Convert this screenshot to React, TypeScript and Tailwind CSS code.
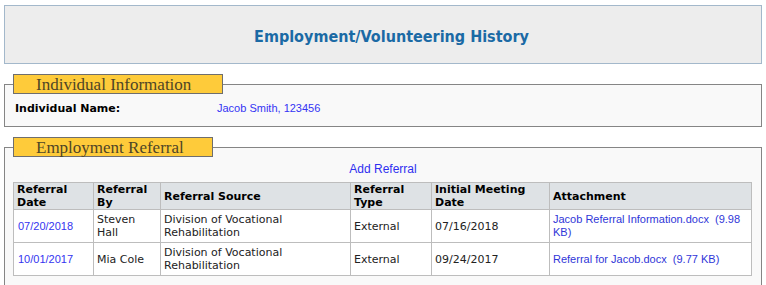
const verdana = "font-['Verdana','DejaVu_Sans',sans-serif]"
const arial = "font-['Arial','Liberation_Sans',sans-serif]"

const rows = [
  {
    date: '07/20/2018',
    by: 'Steven Hall',
    source: 'Division of Vocational Rehabilitation',
    type: 'External',
    meeting: '07/16/2018',
    file: 'Jacob Referral Information.docx',
    size: '(9.98 KB)',
  },
  {
    date: '10/01/2017',
    by: 'Mia Cole',
    source: 'Division of Vocational Rehabilitation',
    type: 'External',
    meeting: '09/24/2017',
    file: 'Referral for Jacob.docx',
    size: '(9.77 KB)',
  },
]

function Legend({ title, width }: { title: string; width: string }) {
  return (
    <legend
      className={`${width} h-[20px] border border-[#6e6e6e] bg-[#fecb3a] pl-[22px] font-['Liberation_Serif',serif] text-[17px] leading-[19px] text-[#4f4526]`}
    >
      {title}
    </legend>
  )
}

export default function App() {
  return (
    <div className="h-[285px] w-[766px] overflow-hidden bg-white px-[4px] pt-[5px]">
      <div className="flex h-[59px] w-[758px] items-center justify-center border border-[#a3b8cb] bg-[#ededed] pl-[17px] pt-[5px]">
        <h1 className="font-['Tahoma','DejaVu_Sans',sans-serif] text-[16px] font-bold font-stretch-semi-condensed text-[#1b6aa5]">
          Employment/Volunteering History
        </h1>
      </div>

      <fieldset className="mt-[10px] w-[758px] border border-[#858585] bg-[#f9f9f9] px-[8px] pb-[11px]">
        <Legend title="Individual Information" width="w-[210px]" />
        <div className="flex pl-[2px] pt-[8px] leading-[13px]">
          <span className={`${verdana} w-[202px] text-[11px] font-bold text-black`}>Individual Name:</span>
          <span className={`${arial} text-[11px] text-[#3434f4]`}>Jacob Smith, 123456</span>
        </div>
      </fieldset>

      <fieldset className="mt-[10px] h-[200px] w-[758px] border border-[#858585] bg-[#f9f9f9] px-[8px]">
        <Legend title="Employment Referral" width="w-[200px]" />
        <div className={`${arial} pt-[5px] text-center text-[12px] leading-[14px] text-[#2f2ff0]`}>
          Add Referral
        </div>
        <table className={`${verdana} mt-[6px] w-[738px] table-fixed border-collapse text-[11px] leading-[13px] text-[#222]`}>
          <colgroup>
            <col className="w-[80px]" />
            <col className="w-[67px]" />
            <col className="w-[190px]" />
            <col className="w-[81px]" />
            <col className="w-[118px]" />
            <col className="w-[202px]" />
          </colgroup>
          <thead>
            <tr className="bg-[#dee2e5] text-left font-bold text-black">
              <th className="border border-[#bdbdbd] px-[3px] py-0">Referral Date</th>
              <th className="border border-[#bdbdbd] px-[3px] py-0">Referral By</th>
              <th className="border border-[#bdbdbd] px-[3px] py-0">Referral Source</th>
              <th className="border border-[#bdbdbd] px-[3px] py-0">Referral Type</th>
              <th className="border border-[#bdbdbd] px-[3px] py-0">Initial Meeting Date</th>
              <th className="border border-[#bdbdbd] px-[3px] py-0">Attachment</th>
            </tr>
          </thead>
          <tbody className="bg-white">
            {rows.map((r) => (
              <tr key={r.date}>
                <td className={`${arial} border border-[#bdbdbd] px-[4px] py-[3px] text-[#3434f0]`}>{r.date}</td>
                <td className="border border-[#bdbdbd] px-[3px] py-[3px]">{r.by}</td>
                <td className="border border-[#bdbdbd] px-[3px] py-[3px]">{r.source}</td>
                <td className="border border-[#bdbdbd] px-[3px] py-[3px]">{r.type}</td>
                <td className="border border-[#bdbdbd] px-[3px] py-[3px]">{r.meeting}</td>
                <td className={`${arial} border border-[#bdbdbd] px-[3px] py-[3px] text-[#2f36d8]`}>
                  {`${r.file}\u00a0 ${r.size}`}
                </td>
              </tr>
            ))}
          </tbody>
        </table>
      </fieldset>
    </div>
  )
}
